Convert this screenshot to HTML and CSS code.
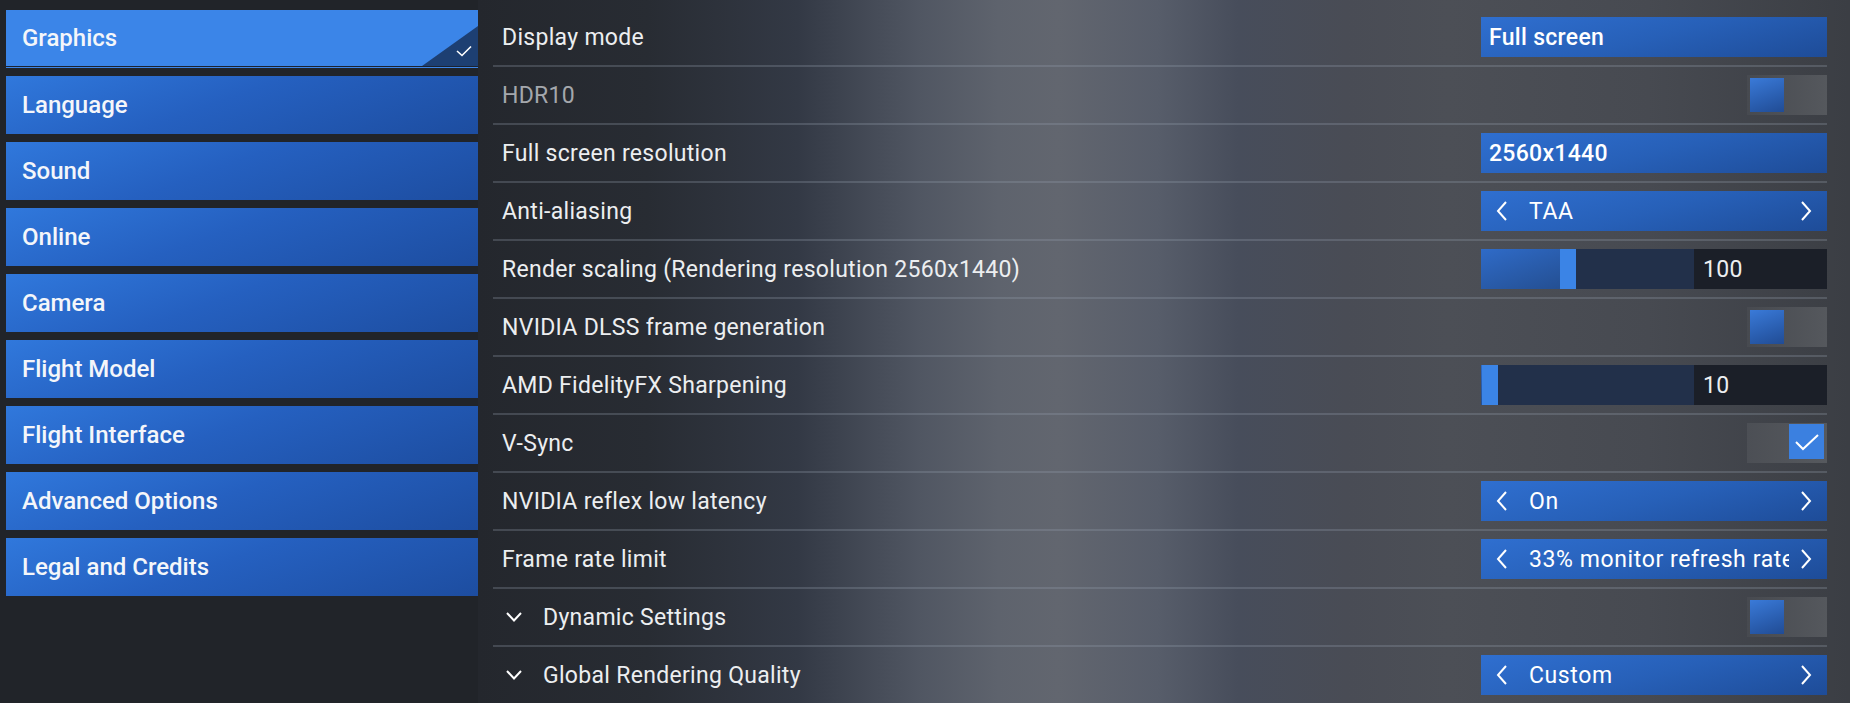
FILE: index.html
```html
<!DOCTYPE html>
<html>
<head>
    <meta charset="UTF-8">
    <title>Options - Graphics</title>
    <!-- Styling for the options screen -->
    <link rel="stylesheet" href="styles.css">
</head>
<body>
<div class="options">
    <!-- Category menu -->
    <nav class="menu">
        <div class="menu-item active">
            Graphics
            <span class="corner">
                <svg width="16" height="12" viewBox="0 0 16 12"><path d="M1 6 L6 10.5 L15 1.5" fill="none" stroke="#fff" stroke-width="1.6"/></svg>
            </span>
        </div>
        <div class="menu-item">Language</div>
        <div class="menu-item">Sound</div>
        <div class="menu-item">Online</div>
        <div class="menu-item">Camera</div>
        <div class="menu-item">Flight Model</div>
        <div class="menu-item">Flight Interface</div>
        <div class="menu-item">Advanced Options</div>
        <div class="menu-item">Legal and Credits</div>
    </nav>

    <!-- Settings list -->
    <main class="settings">
        <div class="row">
            <span class="label">Display mode</span>
            <div class="ctl button">Full screen</div>
        </div>
        <div class="row">
            <span class="label disabled">HDR10</span>
            <div class="toggle"><span class="knob"></span></div>
        </div>
        <div class="row">
            <span class="label">Full screen resolution</span>
            <div class="ctl button">2560x1440</div>
        </div>
        <div class="row">
            <span class="label">Anti-aliasing</span>
            <div class="ctl select">
                <svg class="arrow" width="14" height="22" viewBox="0 0 14 22"><path d="M11 2 L3 11 L11 20" fill="none" stroke="#fff" stroke-width="2"/></svg>
                <span class="value">TAA</span>
                <svg class="arrow" width="14" height="22" viewBox="0 0 14 22"><path d="M3 2 L11 11 L3 20" fill="none" stroke="#fff" stroke-width="2"/></svg>
            </div>
        </div>
        <div class="row">
            <span class="label">Render scaling (Rendering resolution 2560x1440)</span>
            <div class="ctl slider">
                <div class="track">
                    <span class="fill" style="width: 79px"></span>
                    <span class="thumb"></span>
                </div>
                <span class="number">100</span>
            </div>
        </div>
        <div class="row">
            <span class="label">NVIDIA DLSS frame generation</span>
            <div class="toggle"><span class="knob"></span></div>
        </div>
        <div class="row">
            <span class="label">AMD FidelityFX Sharpening</span>
            <div class="ctl slider">
                <div class="track">
                    <span class="fill" style="width: 1px"></span>
                    <span class="thumb"></span>
                </div>
                <span class="number">10</span>
            </div>
        </div>
        <div class="row">
            <span class="label">V-Sync</span>
            <div class="toggle checked">
                <span class="box">
                    <svg width="26" height="20" viewBox="0 0 26 20"><path d="M2 10 L9 17 L24 3" fill="none" stroke="#fff" stroke-width="2"/></svg>
                </span>
            </div>
        </div>
        <div class="row">
            <span class="label">NVIDIA reflex low latency</span>
            <div class="ctl select">
                <svg class="arrow" width="14" height="22" viewBox="0 0 14 22"><path d="M11 2 L3 11 L11 20" fill="none" stroke="#fff" stroke-width="2"/></svg>
                <span class="value">On</span>
                <svg class="arrow" width="14" height="22" viewBox="0 0 14 22"><path d="M3 2 L11 11 L3 20" fill="none" stroke="#fff" stroke-width="2"/></svg>
            </div>
        </div>
        <div class="row">
            <span class="label">Frame rate limit</span>
            <div class="ctl select">
                <svg class="arrow" width="14" height="22" viewBox="0 0 14 22"><path d="M11 2 L3 11 L11 20" fill="none" stroke="#fff" stroke-width="2"/></svg>
                <span class="value">33% monitor refresh rate</span>
                <svg class="arrow" width="14" height="22" viewBox="0 0 14 22"><path d="M3 2 L11 11 L3 20" fill="none" stroke="#fff" stroke-width="2"/></svg>
            </div>
        </div>
        <div class="row">
            <span class="label group">
                <svg class="chevron" width="18" height="12" viewBox="0 0 18 12"><path d="M2 2 L9 9.5 L16 2" fill="none" stroke="#fff" stroke-width="2"/></svg>
                Dynamic Settings
            </span>
            <div class="toggle"><span class="knob"></span></div>
        </div>
        <div class="row">
            <span class="label group">
                <svg class="chevron" width="18" height="12" viewBox="0 0 18 12"><path d="M2 2 L9 9.5 L16 2" fill="none" stroke="#fff" stroke-width="2"/></svg>
                Global Rendering Quality
            </span>
            <div class="ctl select">
                <svg class="arrow" width="14" height="22" viewBox="0 0 14 22"><path d="M11 2 L3 11 L11 20" fill="none" stroke="#fff" stroke-width="2"/></svg>
                <span class="value">Custom</span>
                <svg class="arrow" width="14" height="22" viewBox="0 0 14 22"><path d="M3 2 L11 11 L3 20" fill="none" stroke="#fff" stroke-width="2"/></svg>
            </div>
        </div>
    </main>
</div>
</body>
</html>
```

FILE: styles.css
```css
/* Page */
body {
    margin: 0;
    height: 703px;
    overflow: hidden;
    font-family: Roboto, "Liberation Sans", sans-serif;
    background-color: #212429;
    color: #eceef0;
}

.options {
    display: flex;
    height: 703px;
}

/* Category menu */
.menu {
    width: 472px;
    padding: 10px 0 0 6px;
    display: flex;
    flex-direction: column;
    gap: 8px;
    background-color: #212429;
}

.menu-item {
    position: relative;
    height: 58px;
    flex-shrink: 0;
    display: flex;
    align-items: center;
    padding-left: 16px;
    font-size: 24px;
    font-weight: 500;
    color: #f4f6fa;
    background: linear-gradient(160deg, #3078dc 0%, #2560c0 45%, #1d4da0 100%);
}

.menu-item.active {
    height: 56px;
    margin-bottom: 2px;
    background: #3b85e8;
    box-shadow: 0 1px 0 #1b2230, 0 2px 0 #3b85e8;
}

/* Selected marker in the corner */
.corner {
    position: absolute;
    right: 0;
    bottom: 0;
    width: 56px;
    height: 40px;
    background: #1d3f72;
    clip-path: polygon(100% 0, 100% 100%, 0 100%);
}

.corner svg {
    position: absolute;
    right: 6px;
    bottom: 9px;
}

/* Settings list */
.settings {
    flex: 1;
    padding: 9px 23px 0 15px;
    border-top: 2px solid rgba(150, 158, 170, 0.35);
    margin-top: -2px;
    background: linear-gradient(90deg,
        #24272d 0px,
        #282c33 170px,
        #333945 320px,
        #505662 440px,
        #5e636d 520px,
        #62666f 580px,
        #575d6a 680px,
        #474d5b 760px,
        #494c55 870px,
        #4c4f56 970px,
        #474a51 1170px,
        #3b3e44 1370px);
}

.row {
    height: 56px;
    display: flex;
    align-items: center;
    justify-content: space-between;
    border-bottom: 2px solid rgba(150, 160, 175, 0.28);
}

.label {
    padding-left: 9px;
    font-size: 23px;
    letter-spacing: 0.3px;
    color: #eceef0;
}

.label.disabled {
    color: #a4a7ac;
}

.label.group {
    display: flex;
    align-items: center;
    padding-left: 12px;
}

.chevron {
    margin-right: 20px;
}

/* Controls on the right */
.ctl {
    width: 346px;
    height: 40px;
    flex-shrink: 0;
    display: flex;
    align-items: center;
    box-sizing: border-box;
}

.button {
    padding-left: 8px;
    font-size: 23px;
    font-weight: 500;
    letter-spacing: 0.3px;
    color: #fff;
    background: linear-gradient(165deg, #2f6fd0 0%, #2760b8 50%, #1e4c98 100%);
}

.select {
    padding: 0 14px 0 14px;
    font-size: 23px;
    letter-spacing: 0.6px;
    color: #fff;
    background: linear-gradient(165deg, #2f6fd0 0%, #2760b8 50%, #1e4c98 100%);
}

.select .value {
    flex: 1;
    margin: 0 10px 0 20px;
    white-space: nowrap;
    overflow: hidden;
}

/* Slider */
.slider {
    background: #22304a;
}

.track {
    flex: 1;
    height: 40px;
    display: flex;
}

.fill {
    height: 40px;
    background: linear-gradient(160deg, #2f6bc8 0%, #244f92 100%);
}

.thumb {
    width: 16px;
    height: 40px;
    background: #3b84e6;
}

.number {
    width: 124px;
    height: 40px;
    padding-left: 9px;
    display: flex;
    align-items: center;
    font-size: 23px;
    letter-spacing: 0.3px;
    color: #eceef0;
    background: #1b1f28;
}

/* Toggle */
.toggle {
    width: 80px;
    height: 40px;
    padding: 3px;
    box-sizing: border-box;
    display: flex;
    background: linear-gradient(90deg, #474a50 0%, #55585d 100%);
}

.knob {
    width: 34px;
    height: 34px;
    background: linear-gradient(160deg, #3a7ad8 0%, #2a5eb0 60%, #214c94 100%);
}

.toggle.checked {
    justify-content: flex-end;
    padding: 1px 3px 3px 3px;
    background: linear-gradient(90deg, #4c4f55 0%, #56595e 100%);
}

.box {
    width: 35px;
    height: 35px;
    display: flex;
    align-items: center;
    justify-content: center;
    background: #3b80e0;
}
```
